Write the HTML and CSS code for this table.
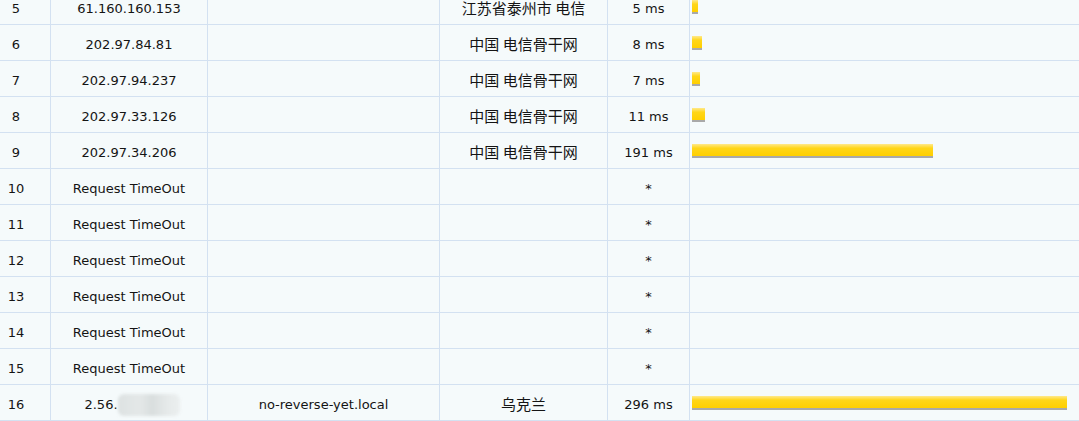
FILE: index.html
```html
<!DOCTYPE html>
<html lang="zh-CN">
<head>
    <meta charset="UTF-8">
    <meta name="viewport" content="width=device-width, initial-scale=1.0">
    <title>Traceroute</title>
    <link rel="stylesheet" href="styles.css">
</head>
<body>
    <table class="trace">
        <colgroup>
            <col class="c-hop">
            <col class="c-ip">
            <col class="c-host">
            <col class="c-loc">
            <col class="c-time">
            <col class="c-bar">
        </colgroup>
        <tbody>
            <tr>
                <td class="hop">5</td>
                <td>61.160.160.153</td>
                <td></td>
                <td class="cn">江苏省泰州市 电信</td>
                <td>5 ms</td>
                <td class="bar-cell"><div class="bar" style="width: 6px"></div></td>
            </tr>
            <tr>
                <td class="hop">6</td>
                <td>202.97.84.81</td>
                <td></td>
                <td class="cn">中国 电信骨干网</td>
                <td>8 ms</td>
                <td class="bar-cell"><div class="bar" style="width: 10px"></div></td>
            </tr>
            <tr>
                <td class="hop">7</td>
                <td>202.97.94.237</td>
                <td></td>
                <td class="cn">中国 电信骨干网</td>
                <td>7 ms</td>
                <td class="bar-cell"><div class="bar" style="width: 8px"></div></td>
            </tr>
            <tr>
                <td class="hop">8</td>
                <td>202.97.33.126</td>
                <td></td>
                <td class="cn">中国 电信骨干网</td>
                <td>11 ms</td>
                <td class="bar-cell"><div class="bar" style="width: 13px"></div></td>
            </tr>
            <tr>
                <td class="hop">9</td>
                <td>202.97.34.206</td>
                <td></td>
                <td class="cn">中国 电信骨干网</td>
                <td>191 ms</td>
                <td class="bar-cell"><div class="bar" style="width: 241px"></div></td>
            </tr>
            <tr>
                <td class="hop">10</td>
                <td>Request TimeOut</td>
                <td></td>
                <td></td>
                <td>*</td>
                <td class="bar-cell"></td>
            </tr>
            <tr>
                <td class="hop">11</td>
                <td>Request TimeOut</td>
                <td></td>
                <td></td>
                <td>*</td>
                <td class="bar-cell"></td>
            </tr>
            <tr>
                <td class="hop">12</td>
                <td>Request TimeOut</td>
                <td></td>
                <td></td>
                <td>*</td>
                <td class="bar-cell"></td>
            </tr>
            <tr>
                <td class="hop">13</td>
                <td>Request TimeOut</td>
                <td></td>
                <td></td>
                <td>*</td>
                <td class="bar-cell"></td>
            </tr>
            <tr>
                <td class="hop">14</td>
                <td>Request TimeOut</td>
                <td></td>
                <td></td>
                <td>*</td>
                <td class="bar-cell"></td>
            </tr>
            <tr>
                <td class="hop">15</td>
                <td>Request TimeOut</td>
                <td></td>
                <td></td>
                <td>*</td>
                <td class="bar-cell"></td>
            </tr>
            <tr>
                <td class="hop">16</td>
                <td class="ip-masked">2.56.<span class="masked"></span></td>
                <td>no-reverse-yet.local</td>
                <td class="cn">乌克兰</td>
                <td>296 ms</td>
                <td class="bar-cell"><div class="bar" style="width: 375px"></div></td>
            </tr>
        </tbody>
    </table>
</body>
</html>
```

FILE: styles.css
```css
html, body {
    margin: 0;
    padding: 0;
    background-color: #f5fafb;
    overflow: hidden;
}
.trace {
    width: 1081px;
    margin-top: -11px;
    border-collapse: separate;
    border-spacing: 0;
    table-layout: fixed;
    font-family: "DejaVu Sans", "Noto Sans CJK SC", sans-serif;
    font-size: 13px;
    color: #141414;
}
.c-hop { width: 51px; }
.c-ip { width: 157px; }
.c-host { width: 232px; }
.c-loc { width: 168px; }
.c-time { width: 82px; }
.trace td {
    height: 31px;
    padding: 4px 0 0;
    text-align: center;
    vertical-align: middle;
    border-right: 1px solid #d3e1f1;
    border-bottom: 1px solid #d3e1f1;
    white-space: nowrap;
}
.trace td.hop {
    padding-right: 18px;
}
.trace td.cn {
    font-family: "Noto Sans CJK SC", sans-serif;
    font-size: 15px;
    padding-top: 2px;
    height: 33px;
}
.trace td.ip-masked {
    padding-left: 6px;
}
.trace td.bar-cell {
    text-align: left;
    padding: 1px 0 0 2px;
    height: 34px;
}
.bar {
    height: 12px;
    border-bottom: 2px solid #a9a9a9;
    background: linear-gradient(#ffe98a, #ffd618 35%, #ffcf00);
}
.masked {
    display: inline-block;
    width: 62px;
    height: 22px;
    vertical-align: middle;
    background: linear-gradient(90deg, #dde2e2 0, #e4e8e8 35%, #d9dede 55%, #e6eaea 80%, #ebefef 100%);
    filter: blur(1.5px);
    border-radius: 6px;
}
```
